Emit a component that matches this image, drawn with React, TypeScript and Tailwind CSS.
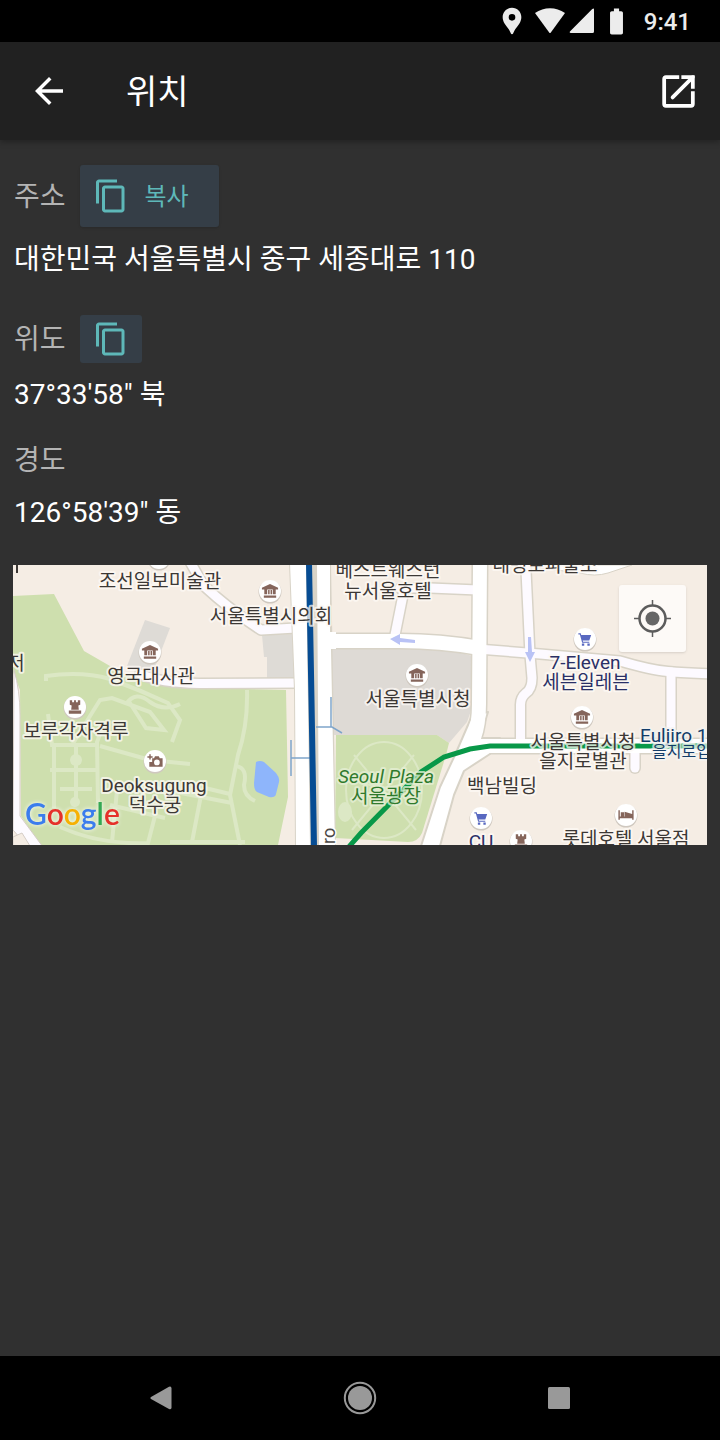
import type { ReactNode } from "react";
import { MdArrowBack, MdBatteryFull, MdContentCopy, MdLocationPin } from "react-icons/md";

const FONT = "font-['Roboto','Noto_Sans_CJK_KR',sans-serif]";

function StatusBar() {
  return (
    <div className="flex h-[42px] shrink-0 items-center justify-end bg-black pr-[29px] text-[#ececec]">
      <MdLocationPin className="size-8" aria-hidden />
      <svg className="ml-[7px] h-[26px] w-[30px]" viewBox="0 0 30 26" fill="currentColor" aria-hidden>
        <path d="M0 5C9-1.3 21-1.3 30 5L15.8 24.4q-.8 1-1.6 0Z" />
      </svg>
      <svg className="ml-1 size-[26px]" viewBox="0 0 26 26" fill="currentColor" aria-hidden>
        <path d="M25 1.5v22a1.5 1.5 0 0 1-1.5 1.5H2Q-.2 25 1.2 23.300L23 1.200Q25-.5 25 1.500Z" />
      </svg>
      <MdBatteryFull className="ml-[6px] size-[31px]" aria-hidden />
      <time className="ml-3 pt-0.5 text-[24px] leading-8 font-medium">9:41</time>
    </div>
  );
}

function OpenIcon() {
  return (
    <svg className="size-[43px]" viewBox="0 0 24 24" fill="none" stroke="currentColor" strokeWidth="2.1" aria-hidden>
      <path d="M12.4 4H5Q4 4 4 5V19Q4 20 5 20H19Q20 20 20 19V11.900" />
      <path d="M13.600 4H20V10.500" />
      <path d="M8.700 15.300L20 4" strokeLinecap="round" />
    </svg>
  );
}

function CopyButton({ label, children }: { label: string; children?: ReactNode }) {
  return (
    <button
      type="button"
      aria-label={label}
      className={
        children
          ? "flex h-[62px] items-center gap-4 rounded-[3px] bg-[#353e47] pr-[30px] pl-[13px] text-[24px] text-[#5eb8b9] shadow-sm"
          : "flex h-12 items-center rounded-[3px] bg-[#353e47] px-[13px] text-[#5eb8b9]"
      }
    >
      <MdContentCopy className="size-9" aria-hidden />
      {children && <span className="pt-0.5">{children}</span>}
    </button>
  );
}

type Pt = [number, number];
type Kind = "museum" | "rook" | "camera" | "cart" | "bed";

const glyphs: Record<Kind, ReactNode> = {
  museum: (
    <path d="M-8.500-3.500L0-7.500L8.500-3.500V-1.500H-8.500ZM-6-2H-3V3.500H-6ZM3-2H6V3.500H3ZM-2-2V3.500H-.4V-2ZM.6-2V3.500H2.200V-2ZM-6.500 4.800H6.500V7H-6.500Z" />
  ),
  rook: (
    <path d="M-5.500-7H-3V-5H-1V-7H1V-5H3V-7H5.500V-2.500L3.500-1.500L4 3H-4L-3.500-1.500L-5.500-2.500ZM-6.500 3.800H6.500V7H-6.500Z" />
  ),
  camera: (
    <path
      fillRule="evenodd"
      d="M-3-3H-1L0-5H4L5-3H8V6H-6V1H-3ZM2-1.500A3 3 0 1 0 2 4.500A3 3 0 1 0 2-1.500ZM-6-7H-4.500V-5H-2.500V-3.500H-4.500V-1.500H-6V-3.500H-8V-5H-6Z"
    />
  ),
  cart: (
    <path d="M-7-6H-4.500L-4-4.300H6.500L4.500 1.500H-2.500L-2 2.800H4.500V4H-3L-5.400-4.800H-7ZM-3.300 4.800H-.8V7H-3.300ZM2.500 4.800H5V7H2.500Z" />
  ),
  bed: (
    <path d="M-8-5H-6.500V1.500H6.500V-5H8V5H6.500V3.500H-6.500V5H-8ZM-5.500-3H-2V1.500H-5.500ZM-1.500-3.500L6.500-1V2H-1.500Z" />
  ),
};

const pois: { kind: Kind; at: Pt }[] = [
  { kind: "museum", at: [159, 558] },
  { kind: "museum", at: [270, 591] },
  { kind: "museum", at: [150, 652] },
  { kind: "museum", at: [417, 675] },
  { kind: "museum", at: [582, 717] },
  { kind: "rook", at: [75, 707] },
  { kind: "rook", at: [521, 841] },
  { kind: "camera", at: [155, 761] },
  { kind: "cart", at: [585, 639] },
  { kind: "cart", at: [481, 818] },
  { kind: "bed", at: [626, 815] },
];

const labels: { text: string; at: Pt; tone?: "navy" | "green" | "blue"; start?: boolean }[] = [
  { text: "저", at: [16, 670] },
  { text: "조선일보미술관", at: [160, 588] },
  { text: "서울특별시의회", at: [271, 623] },
  { text: "영국대사관", at: [151, 683] },
  { text: "보루각자격루", at: [76, 738] },
  { text: "Deoksugung", at: [154, 792] },
  { text: "덕수궁", at: [155, 812] },
  { text: "베스트웨스턴", at: [388, 577] },
  { text: "뉴서울호텔", at: [388, 598] },
  { text: "서울특별시청", at: [418, 706] },
  { text: "태평로파출소", at: [545, 572] },
  { text: "7-Eleven", at: [585, 669], tone: "navy" },
  { text: "세븐일레븐", at: [586, 689], tone: "navy" },
  { text: "서울특별시청", at: [583, 749] },
  { text: "을지로별관", at: [583, 768] },
  { text: "백남빌딩", at: [502, 793] },
  { text: "CU", at: [481, 848], tone: "navy" },
  { text: "롯데호텔 서울점", at: [626, 846] },
  { text: "Seoul Plaza", at: [386, 783], tone: "green" },
  { text: "서울광장", at: [386, 803], tone: "green" },
  { text: "Euljiro 1", at: [640, 742], tone: "blue", start: true },
];

const tones = {
  plain: "fill-[#3c3835] stroke-[#fdf9f5]",
  navy: "fill-[#2a2f66] stroke-[#fdf9f5]",
  blue: "fill-[#123c68] stroke-[#f3f3f1]",
  green: "fill-[#2f7a2c] stroke-[#e6f0d6]",
};

const minorRoads = [
  "M189 560L204 586Q230 610 261 630L296 628",
  "M140 674Q160 683 200 683.500L298 683",
  "M400 588H430L478 590",
  "M404 590L394 640",
  "M484 649.500L540 654L620 661Q650 670 668 671.500T712 674",
  "M525.500 560L530 655L532 678Q532 689 526 693Q520 698 520.500 706V744",
  "M671 672V744",
  "M635 748V768",
];

const mainRoads = ["M326 641H400Q440 641 480 648", "M480 560L479 704Q479 724 474 738", "M478 746H712"];

const parkPaths = [
  "M46 681V676Q82 671 110 679Q140 690 168 703L180 720L172 742",
  "M72 745L100 700L112 698L150 712L164 730L146 728L128 700",
  "M126 704Q136 690 150 702Q164 712 180 704",
  "M104 724L97 742L98 803",
  "M48 714L52 745H96M54 745V808M76 745V800M50 770H96M60 789H92",
  "M100 746L150 760L190 764M118 780L112 842",
  "M110 805L165 818M60 827Q100 845 148 843L156 812",
  "M247 690Q248 725 238 755L230 795L240 845",
  "M140 785L232 803M202 790L192 842M170 842H245M205 788L230 794",
  "M236 766Q248 768 244 785Q244 796 255 801",
];

function MapView() {
  return (
    <div className={`relative mt-8 overflow-hidden ${FONT}`}>
      <svg className="block w-full" viewBox="13 565 694 280" role="img" aria-label="지도">
        <rect x="13" y="565" width="694" height="280" fill="#f5ede4" />

        <path
          d="M13 596L54 594L84 651L110 666L136 680L196 688L286 690L288 797L278 845H40L21 816L20 690L13 672Z"
          fill="#cedfae"
        />
        <g fill="none" stroke="#dce8c5" strokeWidth="4">
          {parkPaths.map((d) => (
            <path key={d} d={d} />
          ))}
        </g>
        <circle cx="76" cy="760" r="6" fill="#dce8c5" />
        <circle cx="75" cy="802" r="5" fill="#dce8c5" />
        <path
          d="M256 762Q260 760 264 762L276 773Q280 778 279 782L276 794Q275 798 269 797L257 792Q254 790 254 783Z"
          fill="#8eb5fb"
        />

        <path d="M145 620L170 628L150 680L127 666Z" fill="#dedbd6" />
        <path d="M262 635L264 657H267V679H294V634Z" fill="#dedbd6" />
        <path d="M330 648H440L473 656V705L467 722L449 743L437 735H330Z" fill="#dedad5" />
        <path d="M336 735H437L449 743L446 755L422 833Q418 842 408 842L335 838Z" fill="#cedfae" />
        <g fill="none" stroke="#dce8c5" strokeWidth="2">
          <ellipse cx="384" cy="790" rx="38" ry="48" />
          <path d="M354 755L416 830M414 755L352 830M350 775Q384 800 419 775" />
        </g>
        <ellipse cx="345" cy="812" rx="7" ry="10" fill="#dce8c5" />

        <path d="M14 670Q20 690 20 715V816L43 847H28L13 830Z" fill="#fdfbff" stroke="#d5cdc6" />
        <path d="M13 837L22 833L30 846H13Z" fill="#f5ede4" stroke="#d5cdc6" />

        <g fill="none" strokeLinejoin="round">
          <g stroke="#d8d3c7">
            <g strokeWidth="12" strokeLinecap="round">
              {minorRoads.map((d) => (
                <path key={d} d={d} />
              ))}
            </g>
            <g strokeWidth="17">
              {mainRoads.map((d) => (
                <path key={d} d={d} />
              ))}
            </g>
          </g>
          <path
            d="M472 715L468 725L455 755L440 787L421 846H440L454 795L464 771L490 754L500 738H480L488 712Z"
            fill="#ffffff"
            stroke="#d8d3c7"
            strokeWidth="2"
          />
          <g stroke="#fdfaff" strokeWidth="9" strokeLinecap="round">
            {minorRoads.map((d) => (
              <path key={d} d={d} />
            ))}
          </g>
          <g stroke="#ffffff" strokeWidth="14">
            {mainRoads.map((d) => (
              <path key={d} d={d} />
            ))}
          </g>
        </g>
        <path d="M540 565H632L608 573Q595 577 580 573L540 568Z" fill="#ffffff" stroke="#d8d3c7" />

        <path d="M289 563L294 690L295 847H336L331 563Z" fill="#d8d3c7" />
        <path d="M290 563H306L310 847H296L295 690Z" fill="#ffffff" />
        <path d="M317 563H330V632H336V649H331L335 847H319Z" fill="#ffffff" />
        <g fill="none" stroke="#7fa5ca" strokeWidth="1.5">
          <path d="M291 740V776M291 758H310" />
          <path d="M316 727H332L342 733M331 697V727" />
        </g>
        <path d="M309 563L311.500 700L314 847" fill="none" stroke="#064c93" strokeWidth="6" />
        <path
          d="M347 849L361 833L421 772L444 757L470 749L490 746H709"
          fill="none"
          stroke="#089848"
          strokeWidth="5"
        />

        <path d="M390 639L400 634V638L415 640V643L400 642V645Z" fill="#b9c2f5" />
        <path d="M528 637H531L532 652H535L530 662L525 652H528Z" fill="#b9c2f5" />

        <text
          transform="translate(335 844) rotate(-90)"
          fontSize="18"
          strokeWidth="3"
          paintOrder="stroke"
          className="fill-[#4b4845] stroke-white"
        >
          ro
        </text>
        <path d="M17 565V573" stroke="#3c3835" strokeWidth="2" />

        {pois.map(({ kind, at }) => (
          <g key={`${kind}-${at[0]}`} transform={`translate(${at[0]} ${at[1]})`}>
            <circle cy="1" r="11.500" fill="#cfc8bf" />
            <circle r="11" fill="#ffffff" />
            <g transform="scale(.95)" fill={kind === "cart" ? "#5868c0" : "#85655b"}>
              {glyphs[kind]}
            </g>
          </g>
        ))}

        <g fontSize="19" strokeWidth="4" strokeLinejoin="round" paintOrder="stroke" textAnchor="middle">
          {labels.map(({ text, at, tone, start }) => (
            <text
              key={`${text}-${at[1]}`}
              x={at[0]}
              y={at[1]}
              textAnchor={start ? "start" : undefined}
              fontStyle={text === "Seoul Plaza" ? "italic" : undefined}
              strokeOpacity="0.75"
              className={tones[tone ?? "plain"]}
            >
              {text}
            </text>
          ))}
          <text x="652" y="757" fontSize="16" textAnchor="start" strokeOpacity="0.75" className={tones.blue}>
            을지로입구
          </text>
        </g>

        <text
          x="25"
          y="825"
          fontSize="30"
          className="font-['Lato',sans-serif] font-semibold drop-shadow-[0_0_2px_#ffffff]"
        >
          <tspan fill="#3b7ded">G</tspan>
          <tspan fill="#e5312a">o</tspan>
          <tspan fill="#f6b003">o</tspan>
          <tspan fill="#3b7ded">g</tspan>
          <tspan fill="#34a853">l</tspan>
          <tspan fill="#e5312a">e</tspan>
        </text>
      </svg>
      <button
        type="button"
        aria-label="내 위치"
        className="absolute top-5 right-[21px] flex size-[67px] items-center justify-center rounded-[3px] bg-[#fdfaf7] shadow"
      >
        <svg className="size-[37px]" viewBox="0 0 37 37" fill="none" stroke="#5c5c5c" aria-hidden>
          <circle cx="18.5" cy="18.5" r="13" strokeWidth="2.5" />
          <circle cx="18.5" cy="18.5" r="7" fill="#666666" stroke="none" />
          <path d="M18.500 0V5M18.500 32V37M0 18.500H5M32 18.500H37" strokeWidth="1.500" />
        </svg>
      </button>
    </div>
  );
}

function NavigationBar() {
  return (
    <nav className="grid h-[84px] shrink-0 grid-cols-3 place-items-center bg-black px-[61px] text-[#999999]">
      <button type="button" aria-label="뒤로">
        <svg className="size-8" viewBox="0 0 32 32" fill="currentColor" aria-hidden>
          <path d="M6 15L24 4.800Q26.500 4 26.500 6.500V25.500Q26.500 28 24 27L6 17Q4.500 16 6 15Z" />
        </svg>
      </button>
      <button type="button" aria-label="홈">
        <svg className="size-[34px]" viewBox="0 0 34 34" aria-hidden>
          <circle cx="17" cy="17" r="15.200" fill="none" stroke="currentColor" strokeWidth="2" />
          <circle cx="17" cy="17" r="12" fill="currentColor" />
        </svg>
      </button>
      <button type="button" aria-label="최근 앱">
        <svg className="size-[22px]" viewBox="0 0 22 22" aria-hidden>
          <rect width="22" height="22" rx="1.500" fill="currentColor" />
        </svg>
      </button>
    </nav>
  );
}

export default function App() {
  return (
    <div lang="ko" className={`flex min-h-screen flex-col bg-[#303030] text-white ${FONT}`}>
      <StatusBar />
      <header className="flex h-[98px] shrink-0 items-center bg-[#212121] pr-5 pl-7 shadow-[0_2px_6px_rgba(0,0,0,0.3)]">
        <button type="button" aria-label="뒤로 가기">
          <MdArrowBack className="size-[42px]" aria-hidden />
        </button>
        <h1 className="ml-14 flex-1 pt-0.5 text-[34px] leading-[48px]">위치</h1>
        <button type="button" aria-label="지도 앱에서 열기">
          <OpenIcon />
        </button>
      </header>
      <main className="flex-1 px-[13px] pt-[25px] text-[28px] leading-10">
        <dl className="pl-px">
          <dt className="flex items-center gap-[14px] text-[#b4b4b4]">
            <span className="pt-0.5">주소</span>
            <CopyButton label="주소 복사">복사</CopyButton>
          </dt>
          <dd className="mt-[13px]">대한민국 서울특별시 중구 세종대로 110</dd>
          <dt className="mt-[35px] flex items-center gap-[14px] text-[#b4b4b4]">
            <span className="pt-0.5">위도</span>
            <CopyButton label="위도 복사" />
          </dt>
          <dd className="mt-3">37°33'58" 북</dd>
          <dt className="mt-[26px] text-[#b4b4b4]">경도</dt>
          <dd className="mt-3">126°58'39" 동</dd>
        </dl>
        <MapView />
      </main>
      <NavigationBar />
    </div>
  );
}
